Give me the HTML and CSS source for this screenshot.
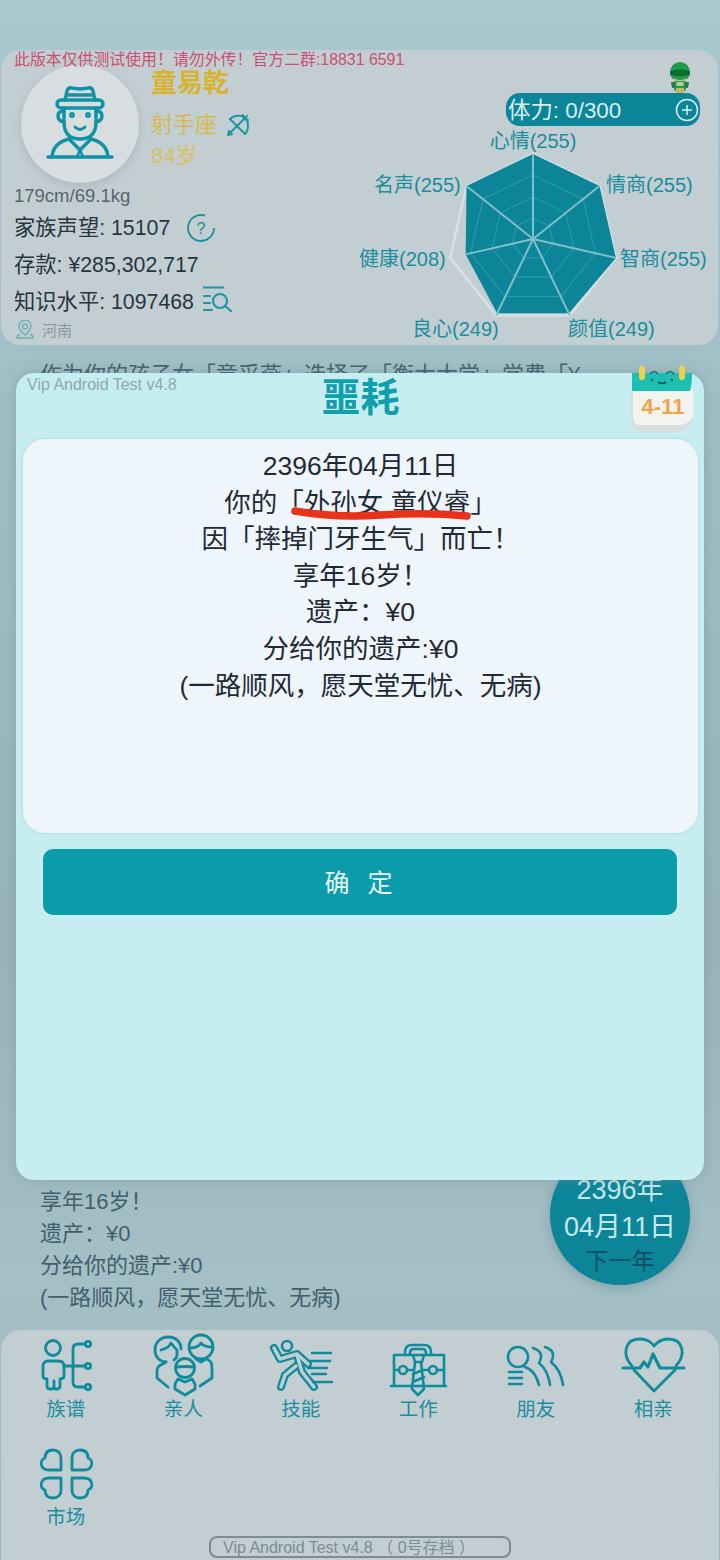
FILE: index.html
```html
<!DOCTYPE html>
<html lang="zh">
<head>
  <meta charset="utf-8">
  <title>人生模拟</title>
  <link rel="stylesheet" href="styles.css">
</head>
<body>
<div class="screen">

  <!-- top profile card -->
  <section class="profile">
    <div class="profile-left">
      <div class="note">此版本仅供测试使用！请勿外传！官方二群:18831 6591</div>
      <div class="identity">
        <div class="avatar">
          <svg width="118" height="118" viewBox="21 65 118 118" fill="none" stroke="#0f93a4" stroke-width="3.4" stroke-linecap="round" stroke-linejoin="round">
            <path d="M65 100l2-9q1-4 5-3l8 1 8-1q4-1 5 3l2 9M66 95h28"/>
            <rect x="57" y="100" width="46" height="8" rx="4"/>
            <path d="M64 108v14q0 17 16 17t16-17v-14"/>
            <path d="M64 111q-6 0-6 5t6 6M96 111q6 0 6 5t-6 6"/>
            <path d="M75 127q5 5 10 0" stroke-width="3"/>
            <path d="M48 157h64M52 157q1-14 17-18l11 11 11-11q16 4 17 18"/>
            <path d="M80 150l-3 7M80 150l3 7" stroke-width="2.6"/>
            <circle cx="72" cy="115" r="1.2"/><circle cx="88" cy="115" r="1.2"/>
          </svg>
        </div>
        <div class="identity-text">
          <div class="name">童易乾</div>
          <div class="sign">射手座
            <svg class="sign-icon" width="24" height="24" viewBox="0 0 24 24" fill="none" stroke="#1a96a4" stroke-width="2" stroke-linejoin="round" stroke-linecap="round">
              <path d="M4 6Q8 2 16 3 22 5 22 12 22 18 19 21"/>
              <path d="M4 6L19 21"/>
              <path d="M2 22L21 3M17 2l1 4 4 1M2 22l1-4M2 22l4-1"/>
            </svg>
          </div>
          <div class="age">84岁</div>
        </div>
      </div>
      <div class="body-size">179cm/69.1kg</div>
      <div class="stat">家族声望: 15107
        <svg class="help" width="30" height="30" viewBox="0 0 30 30" fill="none" stroke="#1a8d9e" stroke-width="1.8">
          <path d="M28 15A13 13 0 1 1 19 2.6"/>
          <text x="15" y="21" text-anchor="middle" class="help-mark">?</text>
        </svg>
      </div>
      <div class="stat">存款: ¥285,302,717</div>
      <div class="stat">知识水平: 1097468
        <svg class="lookup" width="30" height="26" viewBox="0 0 30 26" fill="none" stroke="#1a96a4" stroke-width="2.2" stroke-linecap="round">
          <path d="M1 1.5h19M1 10h6M1 17h6M1 24h8"/>
          <circle cx="17" cy="15" r="7"/>
          <path d="M22 20l6 5"/>
        </svg>
      </div>
      <div class="place">
        <svg width="20" height="20" viewBox="0 0 20 20" fill="none" stroke="#6fb0b8" stroke-width="1.5">
          <path d="M10 15q-6-5-6-9a6 6 0 0 1 12 0q0 4-6 9z"/>
          <circle cx="10" cy="6.5" r="2.4"/>
          <path d="M5 14q-4 2-3 4h16q1-2-3-4"/>
        </svg>
        河南
      </div>
    </div>

    <div class="profile-right">
      <svg class="sprite" width="26" height="31" viewBox="0 0 26 31">
        <rect x="7" y="19" width="12" height="10" rx="2" fill="#1f9c4e"/>
        <rect x="9" y="26" width="8" height="5" fill="#c8b45a"/>
        <path d="M4 20h4v6H5zM22 20h-4v6h3z" fill="#2c7d48"/>
        <circle cx="13" cy="10" r="10" fill="#1c9a4a"/>
        <path d="M3 9q10-3 20 0v4q-10 2-20 0z" fill="#0d6b34"/>
        <path d="M7 16q6 4 12 0v3H7z" fill="#d9b48c"/>
        <rect x="9" y="20" width="8" height="4" rx="2" fill="#a5d6a0"/>
      </svg>
      <div class="stamina">
        <span>体力: 0/300</span>
        <svg width="24" height="24" viewBox="0 0 24 24" fill="none" stroke="#d8f0f3" stroke-width="1.5">
          <circle cx="12" cy="12" r="10.5"/>
          <path d="M12 7v10M7 12h10"/>
        </svg>
      </div>
      <svg class="radar" width="368" height="219" viewBox="350 126 368 219">
        <g transform="translate(533 239)" fill="none">
          <polygon points="0,-85 66.5,-53 82.9,18.9 36.9,76.6 -36.9,76.6 -82.9,18.9 -66.5,-53" stroke="#d2e2e7" stroke-width="2.5"/>
          <polygon points="0,-85 66.5,-53 82.9,18.9 35.8,74.3 -35.8,74.3 -67.3,15.4 -66.5,-53" fill="#0c8598"/>
          <g stroke="#2b97a8" stroke-width="1.2">
            <polygon points="0,-64 50,-39.9 62.4,14.2 27.8,57.7 -27.8,57.7 -62.4,14.2 -50,-39.9"/>
            <polygon points="0,-42 32.8,-26.2 41,9.3 18.2,37.8 -18.2,37.8 -41,9.3 -32.8,-26.2"/>
            <polygon points="0,-21 16.4,-13.1 20.5,4.7 9.1,18.9 -9.1,18.9 -20.5,4.7 -16.4,-13.1"/>
          </g>
          <path d="M0 0V-85M0 0L66.5-53M0 0L82.9 18.9M0 0L36.9 76.6M0 0L-36.9 76.6M0 0L-67.3 15.4M0 0L-66.5-53" stroke="#7fc0cb" stroke-width="2"/>
        </g>
        <g class="radar-label">
          <text x="533" y="148" text-anchor="middle">心情(255)</text>
          <text x="606" y="192">情商(255)</text>
          <text x="620" y="266">智商(255)</text>
          <text x="568" y="336">颜值(249)</text>
          <text x="412" y="336">良心(249)</text>
          <text x="359" y="266">健康(208)</text>
          <text x="374" y="192">名声(255)</text>
        </g>
      </svg>
    </div>
  </section>

  <!-- event log behind the dialog -->
  <section class="log">
    <div class="log-old">
      <p>作为你的孩子女「童采燕」选择了「衡大大学」学费「¥</p>
    </div>
    <div class="log-new">
      <p>享年16岁！</p>
      <p>遗产：¥0</p>
      <p>分给你的遗产:¥0</p>
      <p>(一路顺风，愿天堂无忧、无病)</p>
    </div>
  </section>

  <!-- bottom menu -->
  <nav class="menu">
    <div class="menu-grid">
      <a class="menu-item">
        <svg width="70" height="56" viewBox="31 1338 70 56" fill="none" stroke="#0e8c9b" stroke-width="2.8" stroke-linecap="round" stroke-linejoin="round">
          <circle cx="53" cy="1348" r="7.5"/>
          <path d="M48 1361h10c4 0 6 2 6 5v10c0 2-1 3-4 3v7c0 2-1 3-3 3h-1c-1 0-2-1-2-3v-5 5c0 2-1 3-2 3h-2c-2 0-3-1-3-3v-7c-3 0-4-1-4-3v-10c0-3 2-5 5-5z"/>
          <path d="M85 1344H78q-5 0-5 5v33q0 5 5 5h7M73 1366h12M64 1366h9"/>
          <circle cx="88" cy="1344" r="2.6"/><circle cx="88" cy="1366" r="2.6"/><circle cx="88" cy="1387" r="2.6"/>
        </svg>
        <span>族谱</span>
      </a>
      <a class="menu-item">
        <svg width="70" height="56" viewBox="148 1338 70 56" fill="none" stroke="#0e8c9b" stroke-width="2.8" stroke-linecap="round" stroke-linejoin="round">
          <path d="M166 1362c-6 0-11-5-11-12 0-8 6-13 13-13 8 0 13 5 13 12"/>
          <path d="M161 1350q8-2 10-7 4 5 6 7v5q0 3-3 5"/>
          <circle cx="201" cy="1347" r="12"/>
          <path d="M190 1348q8 0 11-5 3 4 11 4"/>
          <path d="M166 1362l-7 4q-2 2-2 5v7l11 9M207 1359l4 3q1 3 1 8v8l-12 8M196 1359l5 3 5-3"/>
          <circle cx="185" cy="1368" r="9.5"/>
          <path d="M176 1367q9-1 18 0M178 1379l7 3 7-3 3 5v5l-10 6-10-6v-5z"/>
        </svg>
        <span>亲人</span>
      </a>
      <a class="menu-item">
        <svg width="70" height="56" viewBox="266 1338 70 56" fill="none" stroke-linecap="round" stroke-linejoin="round">
          <g stroke="#0e8c9b" stroke-width="8">
            <path d="M274 1348l6 11 17-5 11 10"/>
            <path d="M297 1355l5 17 12 15M296 1366l-11 9-4 12"/>
          </g>
          <g stroke="#c3ced3" stroke-width="3.4">
            <path d="M274 1348l6 11 17-5 11 10"/>
            <path d="M297 1355l5 17 12 15M296 1366l-11 9-4 12"/>
          </g>
          <circle cx="287" cy="1346" r="5" stroke="#0e8c9b" stroke-width="2.6"/>
          <path d="M312 1353h19M310 1361h20M308 1368h19M312 1374h14M313 1382h19" stroke="#0e8c9b" stroke-width="2.4"/>
        </svg>
        <span>技能</span>
      </a>
      <a class="menu-item">
        <svg width="70" height="56" viewBox="383 1338 70 56" fill="none" stroke="#0e8c9b" stroke-width="2.6" stroke-linecap="round" stroke-linejoin="round">
          <path d="M405 1355v-3q0-7 7-7h12q7 0 7 7v3M410 1355v-2q0-4 4-4h8q4 0 4 4v2"/>
          <path d="M411 1355h-17v31M425 1355h19v31M391 1386h55M394 1370h5M407 1370h5M424 1370h4M437 1370h7M412 1386h-6M425 1386h5"/>
          <circle cx="403" cy="1370" r="4"/><circle cx="433" cy="1370" r="4"/>
          <path d="M413 1355h11l-2 7h-7zM415 1362l-3 27 6 6 6-6-3-27M413 1374l10-4M413 1382l11-5"/>
        </svg>
        <span>工作</span>
      </a>
      <a class="menu-item">
        <svg width="70" height="56" viewBox="501 1338 70 56" fill="none" stroke="#0e8c9b" stroke-width="2.6" stroke-linecap="round" stroke-linejoin="round">
          <circle cx="518" cy="1357" r="10"/>
          <path d="M509 1372h13M509 1378h13M509 1384h13"/>
          <path d="M525 1367q10 3 14 18M533 1348q9 3 8 9-1 5-2 6 9 7 11 22M545 1347q9 3 8 9-1 5-2 6 10 8 12 23"/>
        </svg>
        <span>朋友</span>
      </a>
      <a class="menu-item">
        <svg width="70" height="56" viewBox="618 1338 70 56" fill="none" stroke="#0e8c9b" stroke-width="2.8" stroke-linecap="round" stroke-linejoin="round">
          <path d="M632 1366c-10-11-8-27 8-27 10 0 14 7 14 7s5-7 14-7c16 0 18 16 8 27M634 1370l20 21 21-21"/>
          <path d="M623 1368h17l4-6 4 5 5-13 7 14h24" stroke-width="3.2"/>
        </svg>
        <span>相亲</span>
      </a>
      <a class="menu-item">
        <svg width="70" height="56" viewBox="31 1446 70 56" fill="none" stroke="#0e8c9b" stroke-width="2.8" stroke-linejoin="round">
          <path d="M61 1470H49c-9 0-10-10-4-12 0-6 3-8 8-8 5 0 8 3 8 8z"/>
          <path transform="matrix(-1 0 0 1 133 0)" d="M61 1470H49c-9 0-10-10-4-12 0-6 3-8 8-8 5 0 8 3 8 8z"/>
          <path transform="matrix(1 0 0 -1 0 2948)" d="M61 1470H49c-9 0-10-10-4-12 0-6 3-8 8-8 5 0 8 3 8 8z"/>
          <path transform="matrix(-1 0 0 -1 133 2948)" d="M61 1470H49c-9 0-10-10-4-12 0-6 3-8 8-8 5 0 8 3 8 8z"/>
        </svg>
        <span>市场</span>
      </a>
    </div>
    <div class="save-tag">Vip Android Test v4.8 （ 0号存档 ）</div>
  </nav>

  <!-- next year button, partly under the dialog -->
  <div class="next-year">
    <div class="next-date">2396年</div>
    <div class="next-date">04月11日</div>
    <div class="next-label">下一年</div>
  </div>

  <!-- death notice dialog -->
  <div class="dialog">
    <div class="dialog-version">Vip Android Test v4.8</div>
    <svg class="calendar" width="66" height="68" viewBox="0 0 66 68">
      <path d="M1 26h62v30q-4 8-14 11H10q-8-3-9-11z" fill="#d9dddc"/>
      <path d="M3 24h60v28q-3 6-12 8H8q-4-1-5-8z" fill="#f3f4f0"/>
      <path d="M2 8h60v4q-1 12-2 14H2z" fill="#1bc0b3"/>
      <rect x="9" y="1" width="6" height="14" rx="3" fill="#f2d04c"/>
      <rect x="49" y="1" width="6" height="14" rx="3" fill="#f2d04c"/>
      <path d="M20 9q4-5 8 0M36 9q4-5 8 0" fill="none" stroke="#1a6d6d" stroke-width="1.6"/>
      <path d="M28 17q4 3 8 0" fill="none" stroke="#13504f" stroke-width="1.6"/>
      <circle cx="22" cy="15" r="1.2" fill="#13504f"/><circle cx="42" cy="15" r="1.2" fill="#13504f"/>
      <text class="calendar-date" x="33" y="49" text-anchor="middle">4-11</text>
    </svg>
    <h2 class="dialog-title">噩耗</h2>
    <div class="dialog-body">
      <p>2396年04月11日</p>
      <p>你的「<span class="marked">外孙女 童仪睿<svg class="scribble" width="180" height="14" viewBox="0 0 180 14" fill="none"><path d="M4 5q40 7 86 4t86 1" stroke="#e8331a" stroke-width="7.5" stroke-linecap="round"/></svg></span>」</p>
      <p>因「摔掉门牙生气」而亡！</p>
      <p>享年16岁！</p>
      <p>遗产：¥0</p>
      <p>分给你的遗产:¥0</p>
      <p>(一路顺风，愿天堂无忧、无病)</p>
    </div>
    <button class="dialog-ok">确 定</button>
  </div>

</div>
</body>
</html>
```

FILE: styles.css
```css
* {
  box-sizing: border-box;
}

body {
  margin: 0;
  font-family: "Liberation Sans", "Noto Sans CJK SC", sans-serif;
}

.screen {
  position: relative;
  width: 720px;
  height: 1560px;
  overflow: hidden;
  display: flex;
  flex-direction: column;
  padding-top: 50px;
  background: linear-gradient(180deg, #a8c7cf 0%, #a0bfc6 25%, #98b4b9 60%, #a4bfc6 82%, #9cb9c1 100%);
}

/* profile card */
.profile {
  display: flex;
  height: 295px;
  margin: 0 2px 0 1px;
  background-color: #c3ced3;
  border-radius: 20px;
  overflow: hidden;
}

.profile-left {
  width: 349px;
  padding-left: 13px;
  flex-shrink: 0;
}

.note {
  height: 15px;
  font-size: 15.9px;
  line-height: 19px;
  white-space: nowrap;
  color: #c9506f;
  position: relative;
  z-index: 1;
}

.identity {
  display: flex;
  height: 118px;
  padding-left: 7px;
}

.avatar {
  width: 118px;
  height: 118px;
  border-radius: 50%;
  background-color: #d8dde0;
  box-shadow: 0 3px 10px rgba(120, 140, 150, 0.35);
  flex-shrink: 0;
}

.avatar svg {
  display: block;
}

.identity-text {
  padding-left: 12px;
}

.name {
  font-size: 26px;
  font-weight: bold;
  line-height: 36px;
  color: #d7b330;
}

.sign {
  display: flex;
  align-items: center;
  gap: 9px;
  margin-top: 8px;
  font-size: 22px;
  line-height: 32px;
  color: #d5b94e;
}

.age {
  font-size: 22px;
  line-height: 30px;
  color: #dcc05a;
}

.body-size {
  height: 26px;
  font-size: 18.5px;
  line-height: 26px;
  color: #55656e;
}

.stat {
  display: flex;
  align-items: center;
  height: 37px;
  padding-bottom: 5px;
  font-size: 21.3px;
  color: #27353e;
}

.help {
  margin: 5px 0 0 16px;
}

.help-mark {
  font-size: 16px;
  fill: #1a8d9e;
  stroke: none;
}

.lookup {
  margin-left: 9px;
}

.place {
  display: flex;
  align-items: center;
  gap: 7px;
  height: 25px;
  padding: 0 0 6px 1px;
  font-size: 15px;
  color: #8a979d;
}

.profile-right {
  flex: 1;
  display: flex;
  flex-direction: column;
  padding-top: 12px;
}

.sprite {
  align-self: flex-end;
  margin-right: 25px;
  display: block;
}

.stamina {
  align-self: flex-end;
  display: flex;
  align-items: center;
  justify-content: space-between;
  width: 194px;
  height: 33px;
  margin-right: 18px;
  padding: 0 1px 4px 2px;
  border-radius: 14px;
  font-size: 22.4px;
  color: #d8f0f3;
  background-color: #0c8598;
}

.stamina svg {
  margin-top: 4px;
}

.radar {
  display: block;
}

.radar-label {
  font-size: 20px;
  fill: #1a8d9e;
}

/* log */
.log {
  flex: 1;
  min-height: 0;
  display: flex;
  flex-direction: column;
  justify-content: space-between;
  overflow: hidden;
  padding: 0 0 16px 40px;
  font-size: 22px;
  line-height: 32px;
  color: #41606b;
}

.log p {
  margin: 0;
  white-space: nowrap;
}

.log-old {
  margin-top: 14px;
}

/* bottom menu */
.menu {
  height: 230px;
  padding: 8px 8px 0;
  display: flex;
  flex-direction: column;
  background-color: #c3ced3;
  border-radius: 20px 20px 0 0;
  margin: 0 1px;
}

.menu-grid {
  display: grid;
  grid-template-columns: repeat(6, 117.5px);
  grid-auto-rows: 108px;
  height: 198px;
  margin-left: -2px;
}

.menu-item {
  display: flex;
  flex-direction: column;
  align-items: center;
}

.menu-item svg {
  display: block;
  height: 56px;
  flex-shrink: 0;
  overflow: visible;
}

.menu-item span {
  margin-top: 1px;
  font-size: 19.5px;
  line-height: 28px;
  color: #1a8d9e;
}

.save-tag {
  align-self: center;
  width: 302px;
  height: 22px;
  padding-left: 12px;
  border: 2px solid #7d8b92;
  border-radius: 8px;
  font-size: 16px;
  line-height: 19px;
  white-space: nowrap;
  color: #7d8b92;
}

/* next year badge */
.next-year {
  position: absolute;
  left: 550px;
  top: 1145px;
  width: 140px;
  height: 140px;
  padding-top: 27px;
  border-radius: 50%;
  text-align: center;
  background-color: #0c8598;
  box-shadow: 0 3px 12px rgba(90, 120, 130, 0.4);
}

.next-date {
  font-size: 27px;
  line-height: 37px;
  color: #c6e8ec;
}

.next-label {
  font-size: 23px;
  line-height: 30px;
  color: #0a4f63;
}

/* dialog */
.dialog {
  position: absolute;
  left: 16px;
  top: 373px;
  width: 688px;
  height: 807px;
  padding: 0 6px 0 7px;
  border-radius: 18px;
  background-color: #c6eef1;
  box-shadow: 0 0 14px rgba(110, 140, 150, 0.45);
}

.dialog-version {
  position: absolute;
  left: 11px;
  top: 3px;
  font-size: 16px;
  line-height: 18px;
  color: #8fa8ae;
}

.calendar {
  position: absolute;
  left: 614px;
  top: -8px;
}

.calendar-date {
  font-size: 22px;
  font-weight: bold;
  fill: #f0a24a;
}

.dialog-title {
  margin: 0;
  height: 66px;
  font-size: 39px;
  font-weight: bold;
  line-height: 50px;
  text-align: center;
  color: #0f9fae;
}

.dialog-body {
  height: 394px;
  padding-top: 9px;
  border-radius: 22px;
  background-color: #eff6fb;
  font-size: 26.5px;
  line-height: 36.6px;
  text-align: center;
  color: #1f2a36;
  box-shadow: 0 0 3px rgba(150, 190, 200, 0.5);
}

.dialog-body p {
  margin: 0;
}

.marked {
  position: relative;
}

.scribble {
  position: absolute;
  left: -13px;
  bottom: -2px;
}

.dialog-ok {
  display: block;
  width: 634px;
  height: 66px;
  margin: 16px 0 0 20px;
  padding: 0 0 3px;
  border: none;
  border-radius: 10px;
  font-family: inherit;
  font-size: 25px;
  letter-spacing: 3px;
  word-spacing: 5px;
  color: #e6f6f8;
  background-color: #0b9bab;
}
```
